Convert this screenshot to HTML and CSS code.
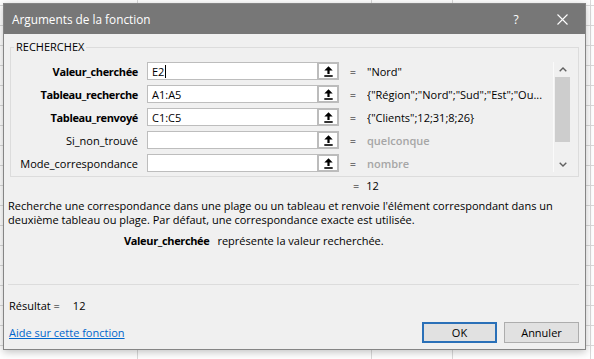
FILE: index.html
```html
<!DOCTYPE html>
<html lang="fr">
<head>
    <meta charset="UTF-8">
    <title>Arguments de la fonction</title>
    <link rel="stylesheet" href="styles.css">
</head>
<body>
    <div class="dialog">
        <div class="titlebar">
            <span class="title">Arguments de la fonction</span>
            <span class="tb-btn">?</span>
            <span class="tb-btn">
                <svg width="11" height="11" viewBox="0 0 11 11"><path d="M0.5 0.5L10.5 10.5M10.5 0.5L0.5 10.5" stroke="#fff" stroke-width="1.1" fill="none"/></svg>
            </span>
        </div>

        <div class="content">
            <fieldset class="group">
                <legend>RECHERCHEX</legend>
                <div class="args">
                    <div class="rows">
                        <span class="name req">Valeur_cherchée</span>
                        <span class="field">E2<span class="caret"></span></span>
                        <span class="ref"><svg width="9" height="11" viewBox="0 0 9 11"><path d="M4.5 0.3L8.7 4.6H5.6V8H3.4V4.6H0.3Z" fill="#000"/><rect x="0.3" y="9.2" width="8.4" height="1.6" fill="#000"/></svg></span>
                        <span class="eq">=</span>
                        <span class="val">"Nord"</span>

                        <span class="name req">Tableau_recherche</span>
                        <span class="field">A1:A5</span>
                        <span class="ref"><svg width="9" height="11" viewBox="0 0 9 11"><path d="M4.5 0.3L8.7 4.6H5.6V8H3.4V4.6H0.3Z" fill="#000"/><rect x="0.3" y="9.2" width="8.4" height="1.6" fill="#000"/></svg></span>
                        <span class="eq">=</span>
                        <span class="val">{"Région";"Nord";"Sud";"Est";"Ou...</span>

                        <span class="name req">Tableau_renvoyé</span>
                        <span class="field">C1:C5</span>
                        <span class="ref"><svg width="9" height="11" viewBox="0 0 9 11"><path d="M4.5 0.3L8.7 4.6H5.6V8H3.4V4.6H0.3Z" fill="#000"/><rect x="0.3" y="9.2" width="8.4" height="1.6" fill="#000"/></svg></span>
                        <span class="eq">=</span>
                        <span class="val">{"Clients";12;31;8;26}</span>

                        <span class="name">Si_non_trouvé</span>
                        <span class="field"></span>
                        <span class="ref"><svg width="9" height="11" viewBox="0 0 9 11"><path d="M4.5 0.3L8.7 4.6H5.6V8H3.4V4.6H0.3Z" fill="#000"/><rect x="0.3" y="9.2" width="8.4" height="1.6" fill="#000"/></svg></span>
                        <span class="eq">=</span>
                        <span class="val hint">quelconque</span>

                        <span class="name">Mode_correspondance</span>
                        <span class="field"></span>
                        <span class="ref"><svg width="9" height="11" viewBox="0 0 9 11"><path d="M4.5 0.3L8.7 4.6H5.6V8H3.4V4.6H0.3Z" fill="#000"/><rect x="0.3" y="9.2" width="8.4" height="1.6" fill="#000"/></svg></span>
                        <span class="eq">=</span>
                        <span class="val hint">nombre</span>
                    </div>

                    <div class="scroll">
                        <span class="arrow"><svg width="8" height="5" viewBox="0 0 8 5"><path d="M0.7 4.3L4 1L7.3 4.3" stroke="#606060" stroke-width="1.4" fill="none"/></svg></span>
                        <span class="thumb"></span>
                        <span class="track"></span>
                        <span class="arrow"><svg width="8" height="5" viewBox="0 0 8 5"><path d="M0.7 0.7L4 4L7.3 0.7" stroke="#606060" stroke-width="1.4" fill="none"/></svg></span>
                    </div>
                </div>
            </fieldset>

            <div class="total"><span>=</span><span>12</span></div>

            <p class="desc">Recherche une correspondance dans une plage ou un tableau et renvoie l'élément correspondant dans un deuxième tableau ou plage. Par défaut, une correspondance exacte est utilisée.</p>

            <div class="argdesc"><b>Valeur_cherchée</b><span>représente la valeur recherchée.</span></div>

            <hr class="sep">

            <div class="result"><span>Résultat =</span><span>12</span></div>

            <div class="footer">
                <a class="help" href="#">Aide sur cette fonction</a>
                <button class="ok">OK</button>
                <button>Annuler</button>
            </div>
        </div>
    </div>
</body>
</html>
```

FILE: styles.css
```css
* {
    box-sizing: border-box;
}
body {
    margin: 0;
    width: 594px;
    height: 359px;
    overflow: hidden;
    font-family: "Open Sans", "Noto Sans", sans-serif;
    font-size: 11px;
    color: #000;
    background-color: #fff;
    background-image:
        linear-gradient(90deg, transparent 137px, #dadada 137px, #dadada 138px, transparent 138px),
        linear-gradient(90deg, transparent 371px, #dadada 371px, #dadada 372px, transparent 372px),
        linear-gradient(90deg, transparent 452px, #dadada 452px, #dadada 453px, transparent 453px),
        linear-gradient(90deg, transparent 590px, #dadada 590px, #dadada 591px, transparent 591px),
        linear-gradient(#dadada 1px, transparent 1px);
    background-size: 100% 100%, 100% 100%, 100% 100%, 100% 100%, 100% 20px;
    background-position: 0 0, 0 0, 0 0, 0 0, 0 5px;
}
.dialog {
    margin: 3px 0 0 3px;
    width: 583px;
    height: 347px;
    background: #f0f0f0;
    border: 1px solid #858585;
    box-shadow: 0 2px 8px rgba(0,0,0,0.25);
    display: flex;
    flex-direction: column;
}
.titlebar {
    height: 30px;
    flex: none;
    background: #777;
    color: #fff;
    font-size: 11.8px;
    display: flex;
    align-items: center;
}
.title {
    flex: 1;
    padding-left: 8px;
}
.tb-btn {
    width: 46px;
    height: 30px;
    display: flex;
    align-items: center;
    justify-content: center;
    font-size: 12px;
}
.content {
    flex: 1;
    padding: 5px 6px 0 4px;
    display: flex;
    flex-direction: column;
}
.group {
    margin: 0 0 0 2px;
    border: 1px solid #dcdcdc;
    padding: 7px 0 4px 0;
    min-width: 0;
}
.group legend {
    padding: 0 2px;
    margin-left: 3px;
    line-height: 16px;
}
.args {
    display: flex;
}
.rows {
    flex: 1;
    min-width: 0;
    display: grid;
    grid-template-columns: 136px 170px 22px 28px 1fr;
    grid-auto-rows: 18px;
    row-gap: 5px;
    align-items: center;
    overflow: hidden;
}
.name {
    text-align: right;
    padding-right: 9px;
    white-space: nowrap;
}
.name.req {
    font-weight: bold;
    letter-spacing: -0.35px;
}
.field {
    height: 18px;
    background: #fff;
    border: 1px solid #bdbdbd;
    border-right: none;
    padding-left: 4px;
    display: flex;
    align-items: center;
}
.caret {
    width: 1px;
    height: 13px;
    margin-left: 1px;
    background: #000;
}
.ref {
    height: 18px;
    background: #fff;
    border: 2px solid #bcbcbc;
    display: flex;
    align-items: center;
    justify-content: center;
}
.eq {
    text-align: center;
}
.val {
    white-space: nowrap;
    overflow: hidden;
}
.hint {
    color: #a6a6a6;
    font-weight: 600;
}
.scroll {
    width: 18px;
    margin-right: 7px;
    display: flex;
    flex-direction: column;
    border-left: 1px solid #fafafa;
}
.arrow {
    height: 15px;
    display: flex;
    align-items: center;
    justify-content: center;
}
.thumb {
    height: 65px;
    margin: 0 1px 0 1px;
    background: #cdcdcd;
}
.track {
    flex: 1;
}
.total {
    margin: 2px 0 0 345px;
    line-height: 14px;
    display: flex;
    gap: 7px;
}
.desc {
    margin: 6px 0 0;
    line-height: 14px;
}
.argdesc {
    margin-top: 7px;
    padding-left: 116px;
    line-height: 14px;
    display: flex;
    gap: 8px;
}
.argdesc b {
    letter-spacing: -0.35px;
}
.sep {
    margin: 36px 0 0;
    border: 0;
    border-top: 1px solid #dcdcdc;
}
.result {
    margin-top: 14px;
    padding-left: 1px;
    line-height: 14px;
    display: flex;
    gap: 13px;
}
.footer {
    margin-top: 9px;
    padding-left: 1px;
    display: flex;
    align-items: center;
}
.help {
    flex: 1;
    color: #0066cc;
}
button {
    width: 75px;
    height: 21px;
    margin-left: 7px;
    padding: 0;
    font: inherit;
    color: #000;
    background: #e1e1e1;
    border: 1px solid #adadad;
}
button.ok {
    border: 2px solid #2a70b8;
}
```
